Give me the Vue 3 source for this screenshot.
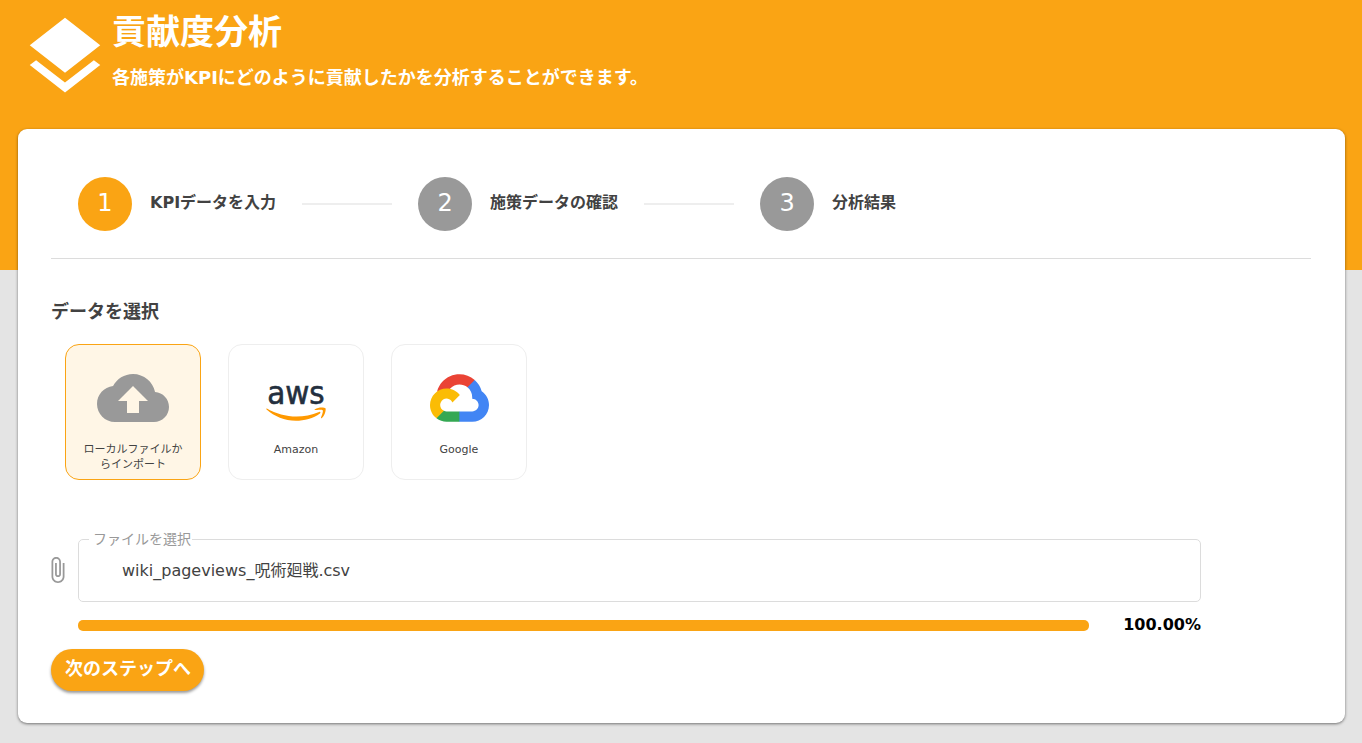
<script setup>
import { ref } from 'vue'

const steps = ['KPIデータを入力', '施策データの確認', '分析結果']
const current = ref(0)

const sources = [
  { id: 'local', label: 'ローカルファイルからインポート' },
  { id: 'aws', label: 'Amazon' },
  { id: 'google', label: 'Google' },
]
const selected = ref('local')
const fileName = ref('wiki_pageviews_呪術廻戦.csv')
const progress = ref(100)
</script>

<template>
  <div class="page">
    <header class="hero">
      <svg class="hero-icon" viewBox="0 0 24 24" aria-hidden="true">
        <path d="M11.99 18.54l-7.37-5.73L3 14.07l9 7 9-7-1.63-1.27-7.38 5.74zM12 16l7.36-5.73L21 9l-9-7-9 7 1.63 1.27L12 16z" />
      </svg>
      <div>
        <h1>貢献度分析</h1>
        <p class="lead">各施策がKPIにどのように貢献したかを分析することができます。</p>
      </div>
    </header>

    <main class="panel">
      <ol class="steps">
        <template v-for="(step, i) in steps" :key="step">
          <li v-if="i > 0" class="step-line" aria-hidden="true"></li>
          <li class="step" :class="{ active: i === current }">
            <span class="step-number">{{ i + 1 }}</span>
            <span class="step-name">{{ step }}</span>
          </li>
        </template>
      </ol>

      <h2>データを選択</h2>
      <div class="sources">
        <button
          v-for="s in sources"
          :key="s.id"
          type="button"
          class="source"
          :class="{ selected: selected === s.id }"
          :aria-pressed="selected === s.id"
          @click="selected = s.id"
        >
          <span class="source-icon">
            <svg v-if="s.id === 'local'" class="cloud" viewBox="0 0 24 24">
              <path d="M19.35 10.04C18.67 6.59 15.64 4 12 4 9.11 4 6.6 5.64 5.35 8.04 2.34 8.36 0 10.91 0 14c0 3.31 2.69 6 6 6h13c2.76 0 5-2.24 5-5 0-2.64-2.05-4.78-4.65-4.96zM14 13v4h-4v-4H7l5-5 5 5h-3z" />
            </svg>
            <svg v-else-if="s.id === 'aws'" class="aws" viewBox="0 0 304 182">
              <text x="6" y="97">aws</text>
              <path d="M273.5,143.7c-32.9,24.3-80.7,37.2-121.8,37.2c-57.6,0-109.5-21.3-148.7-56.7c-3.1-2.8-0.3-6.6,3.4-4.4c42.4,24.6,94.7,39.5,148.8,39.5c36.5,0,76.6-7.6,113.5-23.2C274.2,133.6,278.9,139.7,273.5,143.7z" />
              <path d="M287.2,128.1c-4.2-5.4-27.8-2.6-38.5-1.3c-3.2,0.4-3.7-2.4-0.8-4.5c18.8-13.2,49.7-9.4,53.3-5c3.6,4.5-1,35.4-18.6,50.2c-2.7,2.3-5.3,1.1-4.1-1.9C282.5,155.7,291.4,133.4,287.2,128.1z" />
            </svg>
            <svg v-else class="google" viewBox="0 0 256 206">
              <path fill="#ea4335" d="M170.252,56.819 L192.505,34.566 L193.988,25.196 C153.437,-11.678 88.976,-7.496 52.42,33.92 C42.267,45.423 34.734,59.764 30.717,74.573 L38.687,73.45 L83.191,66.111 L86.627,62.597 C106.424,40.855 139.896,37.93 162.757,56.431 Z" />
              <path fill="#4285f4" d="M224.205,73.918 C219.09,55.082 208.588,38.149 193.988,25.196 L162.757,56.427 C175.944,67.202 183.455,83.427 183.137,100.453 L183.137,105.997 C198.486,105.997 210.93,118.44 210.93,133.79 C210.93,149.14 198.486,161.284 183.137,161.284 L127.464,161.284 L121.997,167.222 L121.997,200.564 L127.464,205.795 L183.137,205.795 C223.065,206.106 255.687,174.302 255.998,134.374 C256.186,110.169 244.252,87.479 224.205,73.918 Z" />
              <path fill="#34a853" d="M71.87,205.795 L127.464,205.795 L127.464,161.289 L71.87,161.289 C67.909,161.289 63.994,160.437 60.392,158.791 L52.495,161.211 L30.087,183.464 L28.135,191.034 C40.702,200.523 56.123,205.637 71.87,205.795 Z" />
              <path fill="#fbbc05" d="M71.87,61.425 C31.942,61.664 -0.237,94.228 0.001,134.156 C0.134,156.452 10.548,177.445 28.244,191.009 L60.491,158.762 C46.506,152.443 40.29,135.982 46.609,121.997 C52.928,108.012 69.389,101.796 83.374,108.115 C89.537,110.908 94.471,115.842 97.256,121.997 L129.502,89.751 C115.782,71.815 94.45,61.339 71.87,61.425 Z" />
            </svg>
          </span>
          <span class="source-label">{{ s.label }}</span>
        </button>
      </div>

      <div class="upload">
        <svg class="clip" viewBox="7 1 11 22" aria-hidden="true">
          <path d="M16.5 6v11.5c0 2.21-1.79 4-4 4s-4-1.79-4-4V5c0-1.38 1.12-2.5 2.5-2.5s2.5 1.12 2.5 2.5v10.5c0 .55-.45 1-1 1s-1-.45-1-1V6H10v9.5c0 1.38 1.12 2.5 2.5 2.5s2.5-1.12 2.5-2.5V5c0-2.21-1.79-4-4-4S7 2.79 7 5v12.5c0 3.04 2.46 5.5 5.5 5.5s5.5-2.46 5.5-5.5V6h-1.5z" />
        </svg>
        <fieldset class="field">
          <legend><label for="file-name">ファイルを選択</label></legend>
          <input id="file-name" type="text" readonly :value="fileName" />
        </fieldset>
        <div class="progress">
          <div class="track" role="progressbar" aria-label="アップロード" :aria-valuenow="progress">
            <div class="bar" :style="{ width: progress + '%' }"></div>
          </div>
          <span class="percent">{{ progress.toFixed(2) }}%</span>
        </div>
      </div>

      <button type="button" class="next">次のステップへ</button>
    </main>
  </div>
</template>

<style>
body {
  margin: 0;
  background: #e4e4e4;
}
</style>

<style scoped>
.page {
  min-height: 100vh;
  box-sizing: border-box;
  padding-bottom: 20px;
  background: #e4e4e4;
  color: #424242;
  font-family: "DejaVu Sans", "Noto Sans CJK JP", sans-serif;
}
.page * {
  box-sizing: border-box;
}
button,
input {
  font-family: inherit;
}
.hero {
  display: flex;
  padding: 10px 18px 166px;
  background: #faa414;
  color: #fff;
}
.hero-icon {
  width: 94px;
  height: 94px;
  fill: #fff;
}
h1 {
  margin: 0;
  font-size: 34px;
  line-height: 44px;
}
.lead {
  margin: 11px 0 0;
  font-size: 18px;
  font-weight: 700;
  line-height: 26px;
}
.panel {
  margin: -141px 17px 0 18px;
  padding: 48px 34px 32px 33px;
  border-radius: 9px;
  background: #fff;
  box-shadow: 0 1px 3px rgba(0, 0, 0, 0.5);
}
.steps {
  display: flex;
  align-items: center;
  gap: 26px;
  margin: 0;
  padding: 0 27px 27px;
  border-bottom: 1px solid #dcdcdc;
  list-style: none;
}
.step {
  display: flex;
  align-items: center;
  gap: 18px;
}
.step-number {
  width: 54px;
  height: 54px;
  border-radius: 50%;
  background: #999;
  color: #fff;
  font-size: 24px;
  line-height: 52px;
  text-align: center;
}
.active .step-number {
  background: #faa414;
}
.step-name {
  padding-bottom: 2px;
  font-size: 16px;
  font-weight: 700;
  line-height: 24px;
}
.step-line {
  width: 90px;
  height: 2px;
  background: #eee;
}
h2 {
  margin: 39px 0 0;
  font-size: 18px;
  line-height: 27px;
}
.sources {
  display: flex;
  gap: 27px;
  margin: 19px 14px 0;
}
.source {
  display: flex;
  flex-direction: column;
  align-items: center;
  width: 136px;
  height: 136px;
  padding: 17px 16px 0;
  border: 1px solid #eee;
  border-radius: 14px;
  background: #fff;
  color: #424242;
}
.source.selected {
  border-color: #faa414;
  background: #fff6e6;
}
.source-icon {
  display: flex;
  align-items: center;
  justify-content: center;
  height: 72px;
}
.cloud {
  width: 72px;
  height: 72px;
  fill: #999;
}
.aws {
  width: 60px;
  height: 36px;
  margin-top: 9px;
  overflow: visible;
  fill: #ff9900;
}
.aws text {
  fill: #232f3e;
  stroke: #232f3e;
  stroke-width: 3px;
  font-family: "DejaVu Sans Condensed", "Noto Sans", sans-serif;
  font-size: 166px;
}
.google {
  width: 59px;
  height: 48px;
}
.source-label {
  margin-top: 8px;
  font-size: 11px;
  line-height: 15px;
}
.upload {
  display: grid;
  grid-template-columns: 14px 1fr;
  column-gap: 13px;
  margin: 49px 110px 0 0;
}
.clip {
  width: 14px;
  height: 26px;
  margin-top: 28px;
  fill: #999;
}
.field {
  min-width: 0;
  margin: 0;
  padding: 0 10px;
  border: 1px solid #dcdcdc;
  border-radius: 5px;
}
legend {
  padding: 0 1px 0 4px;
  color: #999;
  font-size: 14px;
  line-height: 20px;
}
.field input {
  display: block;
  width: 100%;
  height: 52px;
  padding: 0 33px 13px;
  border: 0;
  outline: 0;
  background: transparent;
  color: #424242;
  font-size: 16px;
}
.progress {
  grid-column: 2;
  display: flex;
  align-items: center;
  gap: 34px;
  margin-top: 11px;
}
.track {
  flex: 1;
  height: 11px;
  margin-top: 1px;
}
.bar {
  height: 100%;
  border-radius: 5px;
  background: #faa414;
}
.percent {
  color: #000;
  font-size: 16px;
  font-weight: 700;
  line-height: 24px;
}
.next {
  display: block;
  height: 42px;
  margin-top: 12px;
  padding: 0 13px 6px 14px;
  border: 0;
  border-radius: 21px;
  background: #faa414;
  box-shadow: 0 2px 3px rgba(0, 0, 0, 0.4);
  color: #fff;
  font-size: 18px;
  font-weight: 700;
}
</style>
